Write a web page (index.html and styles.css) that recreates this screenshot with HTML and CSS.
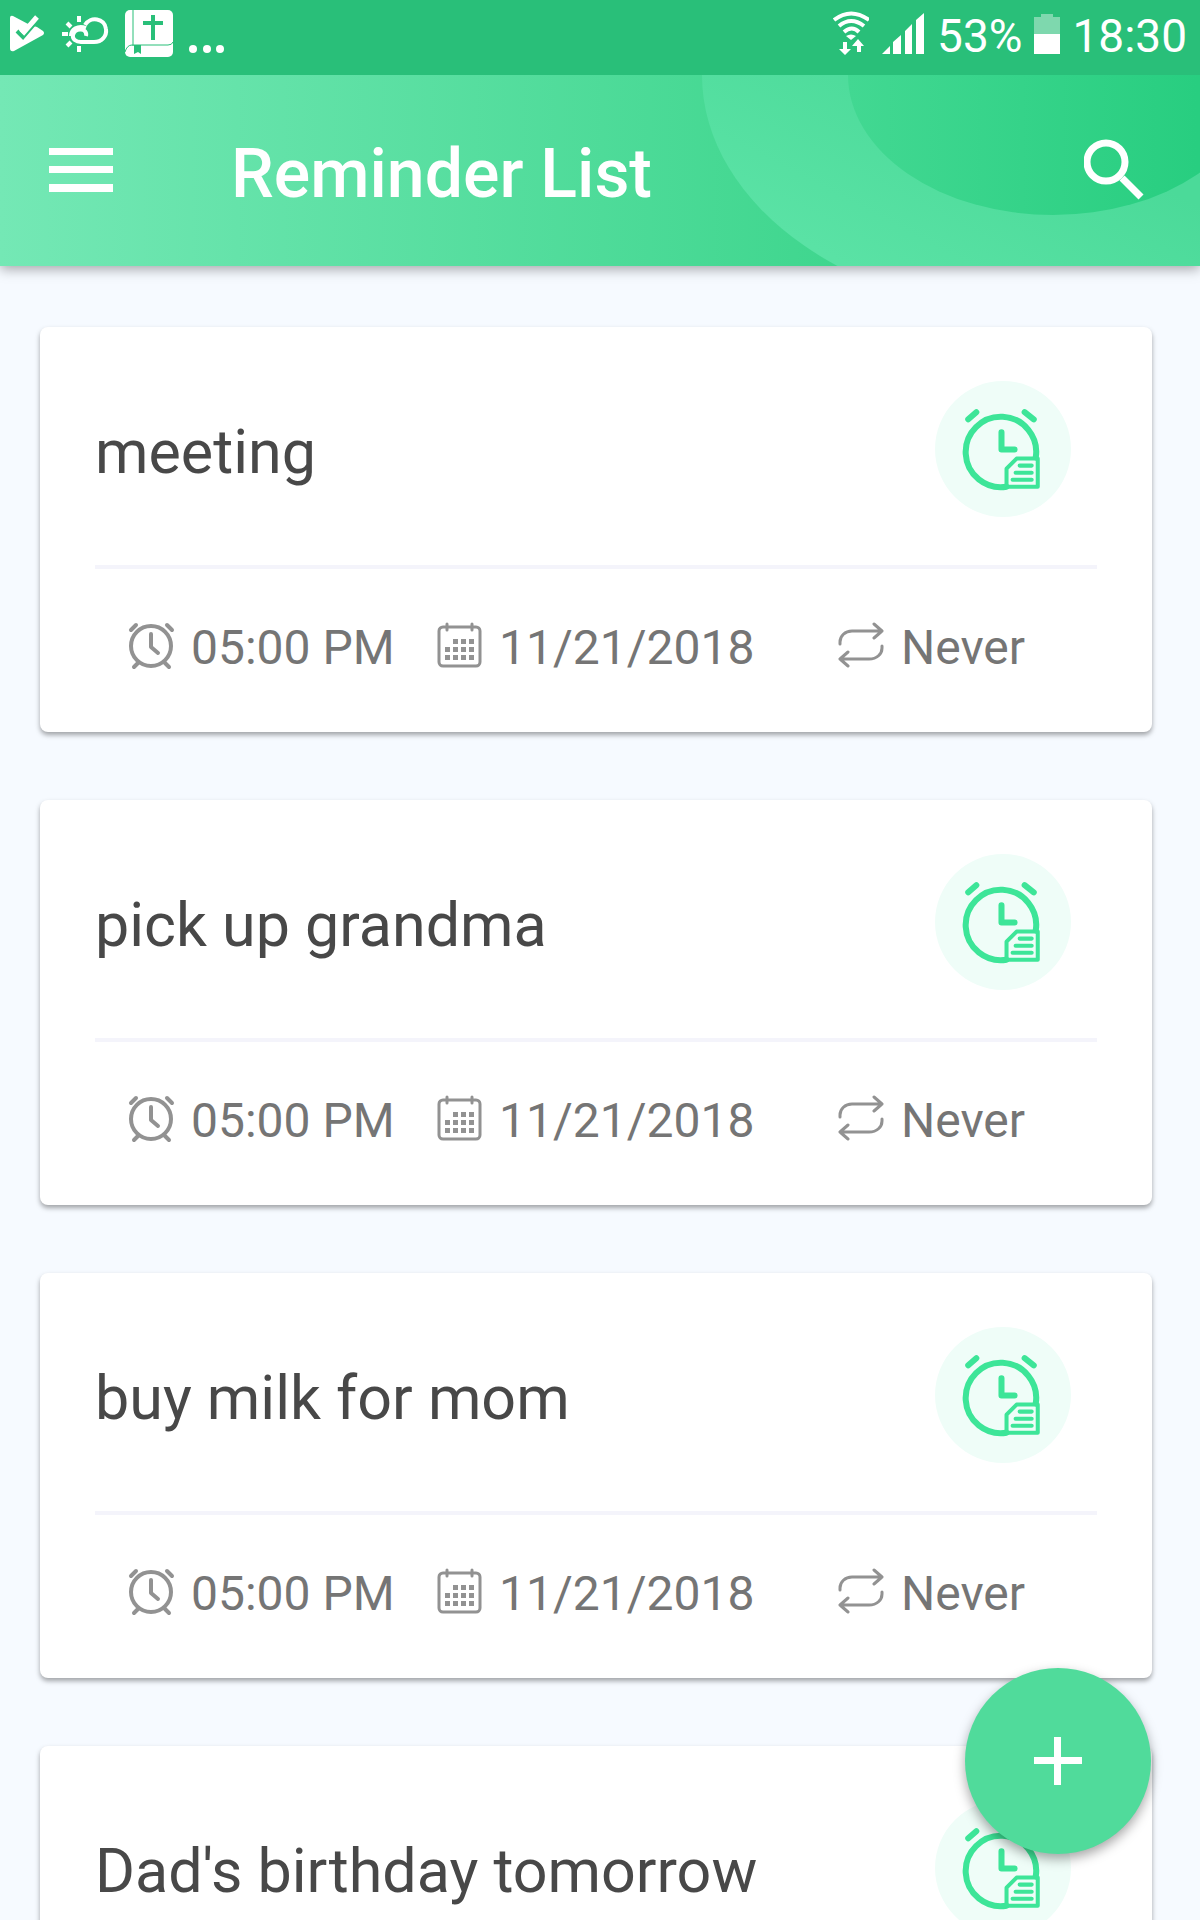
FILE: index.html
```
<!DOCTYPE html>
<html lang="en">
<head>
  <meta charset="UTF-8">
  <meta name="viewport" content="width=device-width, initial-scale=1.0">
  <title>Reminder List</title>
  <link rel="stylesheet" href="styles.css">
</head>
<body>
  <!-- Shared icons -->
  <svg class="sprite" aria-hidden="true">
    <symbol id="icon-reminder" viewBox="0 0 135 135">
      <g fill="none" stroke="#3de598" stroke-width="6" stroke-linecap="round" stroke-linejoin="round">
        <path d="M71 105A35 35 0 1 1 100 76"/>
        <path d="M33 38l8-7M89 31l9 7"/>
        <path d="M66 51v17h13"/>
        <path d="M71 105V87l10-10h21v28z" stroke-width="4"/>
        <path d="M84 84h12M80 91h16M77 98h19" stroke-width="4"/>
      </g>
    </symbol>
    <symbol id="icon-clock" viewBox="0 0 48 48">
      <g fill="none" stroke="#929292" stroke-width="4" stroke-linecap="round" stroke-linejoin="round">
        <circle cx="23" cy="24" r="20"/>
        <path d="M23 12v13l7 6"/>
        <path d="M3 8l5-5M39 3l5 5M10 41l-4 4M37 41l4 4"/>
      </g>
    </symbol>
    <symbol id="icon-calendar" viewBox="0 0 48 48">
      <g fill="none" stroke="#929292" stroke-width="3" stroke-linecap="round">
        <rect x="3" y="5" width="41" height="39" rx="4"/>
        <path d="M11 2v6M36 2v6"/>
      </g>
      <path d="M17 17h5v5h-5zM25 17h5v5h-5zM33 17h5v5h-5zM9 25h5v5H9zM17 25h5v5h-5zM25 25h5v5h-5zM33 25h5v5h-5zM9 33h5v5H9zM17 33h5v5h-5zM25 33h5v5h-5zM33 33h5v5h-5z" fill="#929292"/>
    </symbol>
    <symbol id="icon-repeat" viewBox="0 0 48 48">
      <g fill="none" stroke="#929292" stroke-width="3" stroke-linecap="round" stroke-linejoin="round">
        <path d="M2 22v-2C2 14 7 9 14 9h30M36 2l8 7-8 7"/>
        <path d="M44 24v2c0 6-5 11-13 11H2M10 30l-8 7 8 7"/>
      </g>
    </symbol>
  </svg>

  <div class="status-bar">
    <div class="status-left">
      <svg width="38" height="75" viewBox="8 0 38 75">
        <path d="M13 16l17 9 7 2 6 4q2 2 0 4l-29 16q-4 1-4-3V18q0-3 3-2z" fill="#fff"/>
        <path d="M17 31l6 6 13-15" fill="none" stroke="#29bf79" stroke-width="4"/>
        <path d="M21 29l3 3 13-15" fill="none" stroke="#fff" stroke-width="5"/>
      </svg>
      <svg width="48" height="75" viewBox="63 0 48 75" fill="none" stroke="#fff" stroke-width="4">
        <path d="M88 36c2-8-11-9-13-1-1 4 3 7 8 7h13c8 0 13-6 12-13-1-11-16-13-21-4"/>
        <path d="M88 28c-8-3-15 1-15 8"/>
        <path d="M81 16v6M69 23l4 4M64 34h6M69 46l4-4M81 46v6"/>
      </svg>
      <svg width="50" height="75" viewBox="123 0 50 75">
        <rect x="124" y="10" width="48" height="47" rx="5" fill="#fff"/>
        <path d="M132 10v36M172 42q-1 3-5 3h-36q-5 0-7 7" fill="none" stroke="#29bf79"/>
        <path d="M150 15h4v6h8v4h-8v15h-4V25h-8v-4h8zM133 45h7v9l-3-2-4 2z" fill="#29bf79"/>
      </svg>
      <svg width="36" height="75" viewBox="189 0 36 75" fill="#fff">
        <circle cx="193" cy="49" r="4"/>
        <circle cx="207" cy="49" r="4"/>
        <circle cx="220" cy="49" r="4"/>
      </svg>
    </div>
    <div class="status-right">
      <svg width="36" height="75" viewBox="834 0 36 75">
        <path d="M835 20q17-13 35 0M840 26q12-10 25 0M845 32q8-7 15 0" fill="none" stroke="#fff" stroke-width="4"/>
        <path d="M847 36q5-3 10 0l-5 4zM844 42h4v7h4l-6 6-6-6h4zM858 52h4v-6h3l-6-7-6 7h5z" fill="#fff"/>
      </svg>
      <svg width="44" height="75" viewBox="883 0 44 75" fill="#fff">
        <path d="M884 54l8-8v8zM895 54V42l8-7v19zM907 54V31l7-7v30zM918 54V20l8-7v41z"/>
      </svg>
      <span class="battery-level">53%</span>
      <svg width="26" height="75" viewBox="1034 0 26 75" fill="#fff">
        <path d="M1034 17h7v-3h12v3h7v17h-26z" opacity="0.4"/>
        <path d="M1034 34h26v20h-26z"/>
      </svg>
      <time>18:30</time>
    </div>
  </div>

  <header class="app-bar">
    <svg class="app-bar-art" viewBox="0 0 1200 191" preserveAspectRatio="none" aria-hidden="true">
      <defs>
        <linearGradient id="ring" gradientUnits="userSpaceOnUse" x1="850" y1="191" x2="950" y2="0">
          <stop offset="0" stop-color="#5ae2a5"/>
          <stop offset="1" stop-color="#4bda99"/>
        </linearGradient>
        <linearGradient id="disc">
          <stop offset="0" stop-color="#42d892"/>
          <stop offset="0.850" stop-color="#28ce80"/>
        </linearGradient>
      </defs>
      <ellipse cx="1053" cy="0" rx="351" ry="242" fill="url(#ring)"/>
      <ellipse cx="1053" cy="0" rx="205" ry="140" fill="url(#disc)"/>
    </svg>
    <button class="icon-button" type="button" aria-label="Menu">
      <svg width="64" height="64" viewBox="0 0 64 64" fill="#fff">
        <path d="M0 9h64v7H0zM0 27h64v7H0zM0 45h64v8H0z"/>
      </svg>
    </button>
    <h1>Reminder List</h1>
    <button class="icon-button" type="button" aria-label="Search">
      <svg width="60" height="64" viewBox="0 0 60 64" fill="none" stroke="#fff">
        <circle cx="22" cy="23" r="19" stroke-width="7"/>
        <path d="M38 39l19 19" stroke-width="7"/>
      </svg>
    </button>
  </header>

  <main class="reminder-list">
    <article class="card">
      <div class="card-head">
        <h2>meeting</h2>
        <svg class="badge"><use href="#icon-reminder"/></svg>
      </div>
      <div class="card-info">
        <span class="info"><svg><use href="#icon-clock"/></svg>05:00 PM</span>
        <span class="info"><svg><use href="#icon-calendar"/></svg>11/21/2018</span>
        <span class="info"><svg><use href="#icon-repeat"/></svg>Never</span>
      </div>
    </article>

    <article class="card">
      <div class="card-head">
        <h2>pick up grandma</h2>
        <svg class="badge"><use href="#icon-reminder"/></svg>
      </div>
      <div class="card-info">
        <span class="info"><svg><use href="#icon-clock"/></svg>05:00 PM</span>
        <span class="info"><svg><use href="#icon-calendar"/></svg>11/21/2018</span>
        <span class="info"><svg><use href="#icon-repeat"/></svg>Never</span>
      </div>
    </article>

    <article class="card">
      <div class="card-head">
        <h2>buy milk for mom</h2>
        <svg class="badge"><use href="#icon-reminder"/></svg>
      </div>
      <div class="card-info">
        <span class="info"><svg><use href="#icon-clock"/></svg>05:00 PM</span>
        <span class="info"><svg><use href="#icon-calendar"/></svg>11/21/2018</span>
        <span class="info"><svg><use href="#icon-repeat"/></svg>Never</span>
      </div>
    </article>

    <article class="card">
      <div class="card-head">
        <h2>Dad's birthday tomorrow</h2>
        <svg class="badge"><use href="#icon-reminder"/></svg>
      </div>
    </article>
  </main>

  <button class="fab" type="button" aria-label="Add reminder">
    <svg width="48" height="48" viewBox="0 0 48 48" fill="#fff">
      <path d="M20 0h7v20h21v7H27v21h-7V27H0v-7h20z"/>
    </svg>
  </button>
</body>
</html>
```
FILE: styles.css
```
* {
  box-sizing: border-box;
  margin: 0;
  padding: 0;
}

body {
  font-family: Roboto, "Liberation Sans", sans-serif;
  background-color: #f6faff;
  color: #484848;
  display: flex;
  flex-direction: column;
  height: 100vh;
  overflow: hidden;
}

button {
  border: none;
  background: none;
  cursor: pointer;
}

svg {
  display: block;
  flex-shrink: 0;
}

.sprite {
  position: absolute;
  width: 0;
  height: 0;
}

/* Status bar */
.status-bar {
  position: relative;
  z-index: 2;
  display: flex;
  justify-content: space-between;
  flex-shrink: 0;
  height: 75px;
  padding: 0 13px 0 8px;
  background-color: #29bf79;
  color: #fff;
  font-size: 46px;
  line-height: 72px;
}

.status-left,
.status-right {
  display: flex;
  gap: 15px;
}

.status-right {
  gap: 12px;
}

/* App bar */
.app-bar {
  position: relative;
  z-index: 1;
  display: flex;
  align-items: center;
  flex-shrink: 0;
  height: 191px;
  padding: 0 56px 0 49px;
  background: linear-gradient(to right, #74e8b5, #3fd68e 70%);
  box-shadow: 0 3px 12px rgba(0, 0, 0, 0.35);
}

.app-bar-art {
  position: absolute;
  inset: 0;
  width: 100%;
  height: 100%;
}

.icon-button,
.app-bar h1 {
  position: relative;
}

.app-bar h1 {
  flex: 1;
  margin-left: 118px;
  padding-top: 6px;
  color: #fff;
  font-size: 68px;
  font-weight: 500;
  line-height: 80px;
}

/* Reminder cards */
.reminder-list {
  display: flex;
  flex-direction: column;
  gap: 68px;
  flex: 1;
  min-height: 0;
  padding: 61px 48px 0 40px;
  overflow-y: auto;
  scrollbar-width: none;
}

.card {
  flex-shrink: 0;
  padding: 0 55px;
  background-color: #fff;
  border-radius: 8px;
  box-shadow: 0 3px 5px rgba(0, 0, 0, 0.35);
}

.card-head {
  display: flex;
  align-items: center;
  justify-content: space-between;
  height: 242px;
  padding: 6px 26px 0 0;
  border-bottom: 4px solid #f4f4fb;
}

.card h2 {
  padding-top: 6px;
  font-size: 61px;
  font-weight: 400;
  line-height: 72px;
}

.badge {
  width: 136px;
  height: 136px;
  border-radius: 50%;
  background-color: #effdf8;
}

.card-info {
  display: grid;
  grid-template-columns: 308fr 402fr 259fr;
  align-items: center;
  height: 163px;
  padding: 0 0 5px 33px;
}

.info {
  display: flex;
  align-items: center;
  gap: 15px;
  color: #757575;
  font-size: 48px;
  line-height: 56px;
  white-space: nowrap;
}

.info svg {
  width: 48px;
  height: 48px;
  margin-bottom: 4px;
}

/* Floating add button */
.fab {
  position: fixed;
  right: 49px;
  bottom: 66px;
  z-index: 2;
  display: flex;
  align-items: center;
  justify-content: center;
  width: 186px;
  height: 186px;
  border-radius: 50%;
  background-color: #50db9b;
  box-shadow: 0 5px 12px rgba(0, 0, 0, 0.35);
}
```
